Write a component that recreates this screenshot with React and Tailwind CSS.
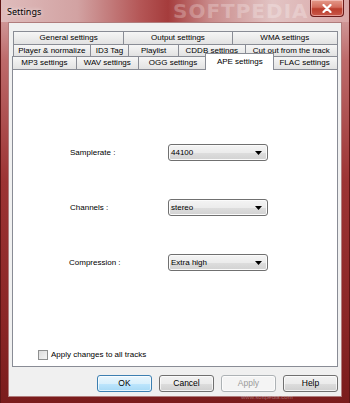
import React from "react";

const tabBase =
  "relative flex items-center justify-center border-t border-l border-r border-[#898c95] -ml-[1px] first:ml-0 bg-[linear-gradient(180deg,#f6f6f6_0%,#ececec_50%,#e2e2e2_100%)] text-[8px] leading-none text-black whitespace-nowrap";

function Tab({ w, children }) {
  return (
    <div className={tabBase} style={{ width: w }}>
      {children}
    </div>
  );
}

function Combo({ value }) {
  return (
    <div className="w-[100px] h-[17px] rounded-[3px] border border-[#707070] bg-[linear-gradient(180deg,#f4f4f4_0%,#ececec_50%,#dedede_51%,#d2d2d2_100%)] flex items-center justify-between pl-[2px] pr-[5px] shadow-[inset_0_0_0_1px_#fbfbfb]">
      <span className="text-[8px] leading-none text-black">{value}</span>
      <svg width="7" height="4" viewBox="0 0 7 4">
        <path d="M0 0 H7 L3.5 4 Z" fill="#000" />
      </svg>
    </div>
  );
}

function Btn({ children, kind }) {
  const cls =
    kind === "default"
      ? "border-[#3c7fb1] bg-[linear-gradient(180deg,#eaf6fd_0%,#d9f0fc_50%,#bee6fd_51%,#a7d9f5_100%)] text-black"
      : kind === "disabled"
      ? "border-[#adb2b5] bg-[#f4f4f4] text-[#9a9a9a]"
      : "border-[#707070] bg-[linear-gradient(180deg,#f2f2f2_0%,#ebebeb_50%,#dddddd_51%,#cfcfcf_100%)] text-black";
  return (
    <div
      className={`w-[55px] h-[17px] rounded-[3px] border flex items-center justify-center text-[8.5px] leading-none shadow-[inset_0_0_0_1px_rgba(255,255,255,0.7)] ${cls}`}
    >
      {children}
    </div>
  );
}

export default function App() {
  return (
    <div className="w-[350px] h-[403px] relative overflow-hidden flex flex-col font-['Liberation_Sans',Arial,sans-serif] bg-[linear-gradient(180deg,#d9aeae_0%,#bd6a6a_15%,#9c3434_45%,#8a2626_80%,#7a1c1c_100%)] border-l border-r border-[#5e1515]">
      {/* title bar */}
      <div className="h-[22px] flex justify-between items-start pl-[6px] pr-[5px] bg-[linear-gradient(90deg,#dfbcbc_0%,#d2a2a2_22%,#b45656_40%,#a53c3c_48%,#c98a8a_60%,#e2c4c4_78%,#d9a6a6_100%)]">
        <span className="self-center mt-[1px] text-[9px] leading-none text-black [text-shadow:0_0_4px_rgba(255,255,255,0.9)] font-['Noto_Sans',sans-serif]">
          Settings
        </span>
        <div className="w-[34px] h-[17px] rounded-b-[4px] border border-t-0 border-[#6b1a1a] bg-[linear-gradient(180deg,#e49a8a_0%,#d36c5c_45%,#bb3d2c_55%,#c9584a_100%)] flex items-center justify-center shadow-[inset_0_0_0_1px_rgba(255,220,220,0.5)]">
          <svg width="10" height="9" viewBox="0 0 10 9">
            <path
              d="M1.5 1 L8.5 8 M8.5 1 L1.5 8"
              stroke="#fff"
              strokeWidth="2.2"
              strokeLinecap="round"
            />
          </svg>
        </div>
      </div>

      {/* client area */}
      <div className="mx-[7px] h-[375px] bg-[#f0f0f0] border border-[#b07c7c] flex flex-col px-[3px] pt-[8px]">
        {/* tab rows */}
        <div className="flex flex-col pl-[1px]">
          <div className="flex h-[13px]">
            <Tab w={112}>General settings</Tab>
            <Tab w={110}>Output settings</Tab>
            <Tab w={107}>WMA settings</Tab>
          </div>
          <div className="flex h-[12px]">
            <Tab w={78}>Player &amp; normalize</Tab>
            <Tab w={40}>ID3 Tag</Tab>
            <Tab w={51}>Playlist</Tab>
            <Tab w={68}>CDDB settings</Tab>
            <Tab w={94}>Cut out from the track</Tab>
          </div>
        </div>
        <div className="flex h-[13px] relative z-10">
          <Tab w={65}>MP3 settings</Tab>
          <Tab w={63}>WAV settings</Tab>
          <Tab w={71}>OGG settings</Tab>
          <div className="relative z-10 -ml-[3px] -mr-[2px] -mt-[3px] h-[17px] w-[69px] flex items-start justify-center pt-[4px] border-t border-l border-r border-[#898c95] bg-white text-[8px] leading-none text-black whitespace-nowrap">
            APE settings
          </div>
          <Tab w={67}>FLAC settings</Tab>
        </div>

        {/* panel */}
        <div className="h-[298px] border border-[#898c95] bg-white flex flex-col pt-[74px] pb-[6px]">
          <div className="flex flex-col gap-[38px] pl-[57px]">
            <div className="flex items-center">
              <span className="w-[98px] text-[8px] leading-none text-black">Samplerate :</span>
              <Combo value="44100" />
            </div>
            <div className="flex items-center">
              <span className="w-[98px] text-[8px] leading-none text-black">Channels :</span>
              <Combo value="stereo" />
            </div>
            <div className="flex items-center">
              <span className="w-[98px] -ml-[1px] mr-[1px] text-[8px] leading-none text-black">Compression :</span>
              <Combo value="Extra high" />
            </div>
          </div>
          <div className="flex-1" />
          <div className="flex items-center pl-[25px] gap-[3px]">
            <div className="w-[10px] h-[10px] border border-[#8e8f8f] bg-[linear-gradient(135deg,#dcdcdc_0%,#f4f4f4_100%)]" />
            <span className="text-[8px] leading-none text-black">Apply changes to all tracks</span>
          </div>
        </div>

        {/* buttons */}
        <div className="flex justify-end gap-[7px] mt-[8px]">
          <Btn kind="default">OK</Btn>
          <Btn>Cancel</Btn>
          <Btn kind="disabled">Apply</Btn>
          <Btn>Help</Btn>
        </div>
      </div>

      {/* watermarks */}
      <div className="absolute left-[172px] top-[1px] text-[20px] leading-none font-bold tracking-[1px] text-white/25 pointer-events-none font-['DejaVu_Sans',sans-serif]">
        SOFTPEDIA
      </div>
      <div className="absolute left-[240px] top-[394px] text-[6px] leading-none text-white/35 pointer-events-none">
        www.softpedia.com
      </div>
    </div>
  );
}
